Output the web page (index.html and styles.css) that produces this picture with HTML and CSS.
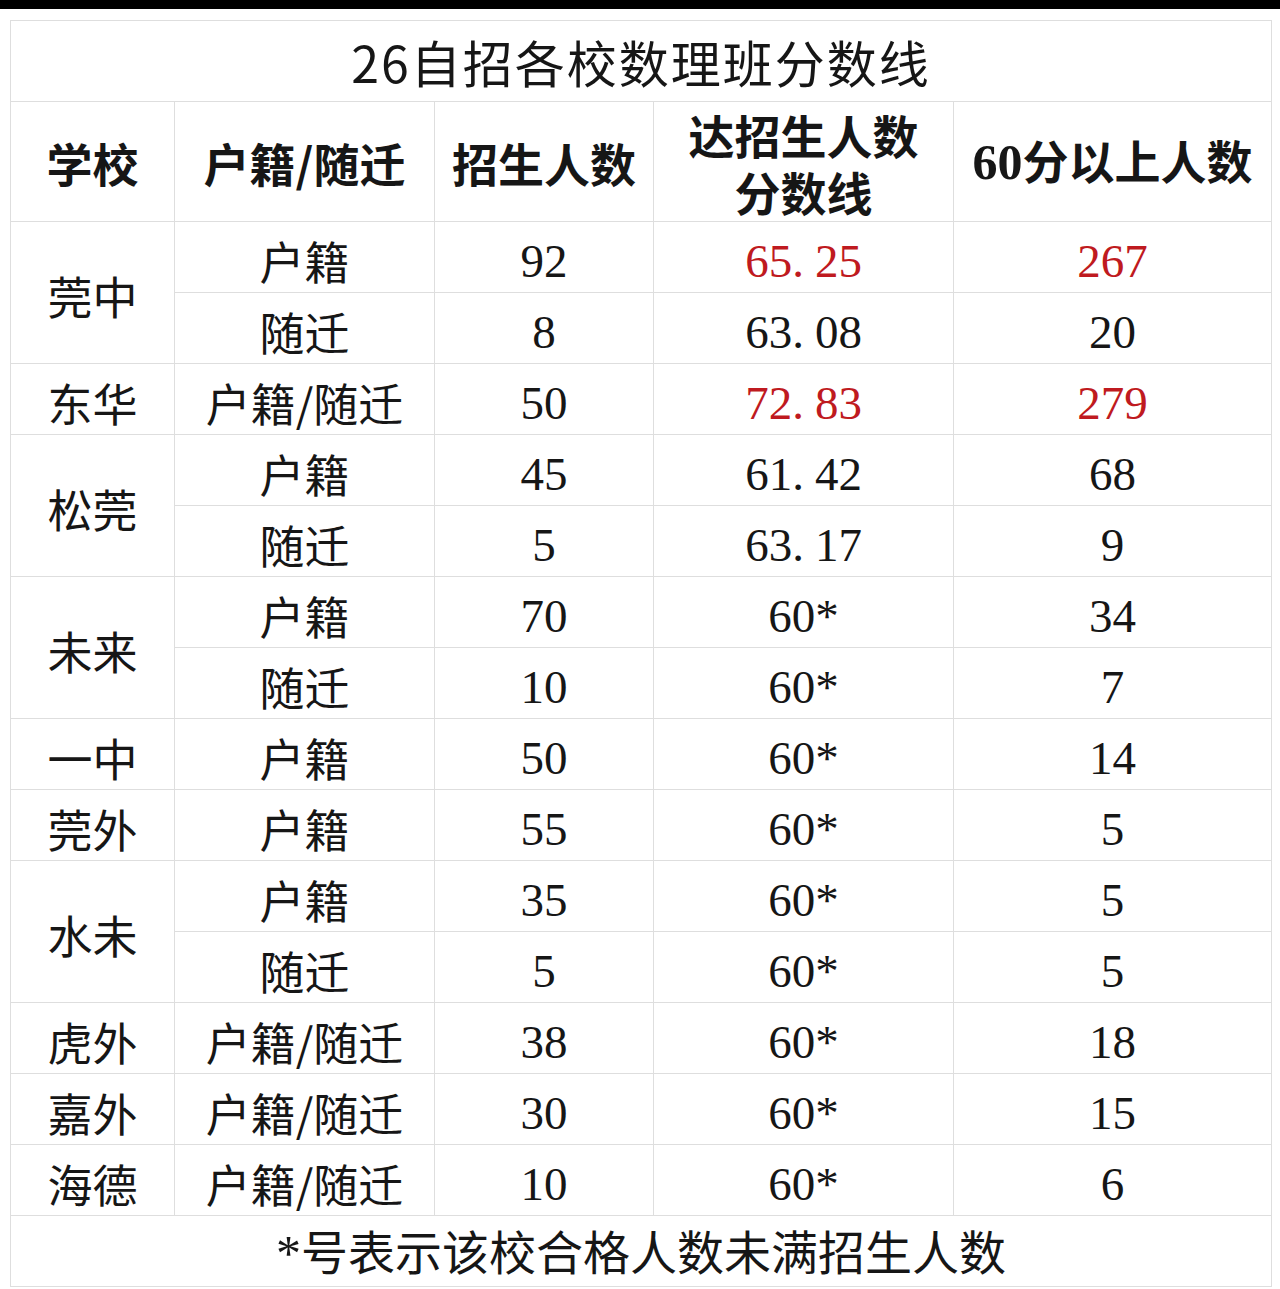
FILE: index.html
```html
<!DOCTYPE html>
<html lang="zh-CN">
<head>
<meta charset="utf-8">
<title>26自招各校数理班分数线</title>
<link rel="stylesheet" href="styles.css">
</head>
<body>
<div class="topbar"></div>
<main class="wrap">
<table class="score">
  <colgroup>
    <col class="c1"><col class="c2"><col class="c3"><col class="c4"><col class="c5">
  </colgroup>
  <thead>
    <tr class="title-row"><th colspan="5" class="title">26自招各校数理班分数线</th></tr>
    <tr class="head-row">
      <th>学校</th>
      <th>户籍/随迁</th>
      <th>招生人数</th>
      <th class="two"><span class="ln">达招生人数</span><span class="ln">分数线</span></th>
      <th><span class="num">60</span>分以上人数</th>
    </tr>
  </thead>
  <tbody>
    <tr><td rowspan="2">莞中</td><td>户籍</td><td class="num">92</td><td class="num red">65<span class="dot">.</span>25</td><td class="num red">267</td></tr>
    <tr><td>随迁</td><td class="num">8</td><td class="num">63<span class="dot">.</span>08</td><td class="num">20</td></tr>
    <tr><td>东华</td><td>户籍/随迁</td><td class="num">50</td><td class="num red">72<span class="dot">.</span>83</td><td class="num red">279</td></tr>
    <tr><td rowspan="2">松莞</td><td>户籍</td><td class="num">45</td><td class="num">61<span class="dot">.</span>42</td><td class="num">68</td></tr>
    <tr><td>随迁</td><td class="num">5</td><td class="num">63<span class="dot">.</span>17</td><td class="num">9</td></tr>
    <tr><td rowspan="2">未来</td><td>户籍</td><td class="num">70</td><td class="num">60*</td><td class="num">34</td></tr>
    <tr><td>随迁</td><td class="num">10</td><td class="num">60*</td><td class="num">7</td></tr>
    <tr><td>一中</td><td>户籍</td><td class="num">50</td><td class="num">60*</td><td class="num">14</td></tr>
    <tr><td>莞外</td><td>户籍</td><td class="num">55</td><td class="num">60*</td><td class="num">5</td></tr>
    <tr><td rowspan="2">水未</td><td>户籍</td><td class="num">35</td><td class="num">60*</td><td class="num">5</td></tr>
    <tr><td>随迁</td><td class="num">5</td><td class="num">60*</td><td class="num">5</td></tr>
    <tr><td>虎外</td><td>户籍/随迁</td><td class="num">38</td><td class="num">60*</td><td class="num">18</td></tr>
    <tr><td>嘉外</td><td>户籍/随迁</td><td class="num">30</td><td class="num">60*</td><td class="num">15</td></tr>
    <tr><td>海德</td><td>户籍/随迁</td><td class="num">10</td><td class="num">60*</td><td class="num">6</td></tr>
  </tbody>
  <tfoot>
    <tr class="foot-row"><td colspan="5" class="note"><span class="num">*</span>号表示该校合格人数未满招生人数</td></tr>
  </tfoot>
</table>
</main>
</body>
</html>
```
FILE: styles.css
```css
html, body {
  margin: 0;
  padding: 0;
  background: #ffffff;
}
body {
  font-family: "Liberation Serif", "Noto Sans CJK SC", serif;
  color: #161616;
}
.topbar {
  height: 9px;
  background: #000000;
}
.wrap {
  padding: 11px 9px 0 10px;
}
.score {
  border-collapse: collapse;
  table-layout: fixed;
  width: 1261px;
}
.c1 { width: 164px; }
.c2 { width: 260px; }
.c3 { width: 219px; }
.c4 { width: 300px; }
.c5 { width: 318px; }

.score tr {
  height: 71px;
}
.score .title-row {
  height: 81px;
}
.score .head-row {
  height: 120px;
}
.score th,
.score td {
  border: 1px solid #dedede;
  text-align: center;
  vertical-align: middle;
  padding: 6px 0 0 0;
  font-family: "Noto Sans CJK SC", sans-serif;
  font-size: 45px;
  font-weight: 400;
  line-height: 1;
}
.score .title-row th {
  font-size: 50px;
  font-weight: 400;
  letter-spacing: 2px;
  padding-top: 0;
}
.score .head-row th {
  font-size: 46px;
  font-weight: 700;
  padding-top: 0;
}
.score .head-row th.two {
  padding-top: 2px;
}
.ln {
  display: block;
  line-height: 57px;
}
.score .num {
  font-family: "Liberation Serif", serif;
  font-size: 47px;
}
.score td.num {
  padding-top: 8px;
}
.score .head-row .num {
  font-family: "Liberation Serif", serif;
  font-size: 50px;
  font-weight: 700;
}
.dot {
  margin-right: 11px;
}
.red {
  color: #bf1a20;
}
.score .foot-row td {
  font-size: 47px;
  padding-top: 2px;
}
.note .num {
  font-size: 50px;
}
```
